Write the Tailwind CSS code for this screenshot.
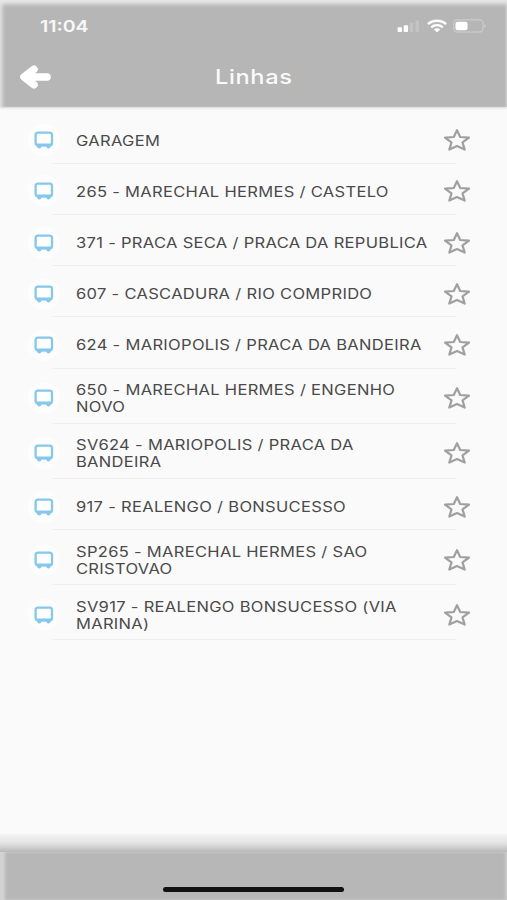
<!DOCTYPE html>
<html lang="pt-BR">
<head>
    <meta charset="UTF-8">
    <meta name="viewport" content="width=device-width, initial-scale=1.0">
    <title>Linhas</title>
    <script src="https://cdn.jsdelivr.net/npm/@tailwindcss/browser@4"></script>
</head>
<body class="bg-[#fafafa] font-['Inter',sans-serif] overflow-hidden">
    <div class="w-[507px] h-[900px] flex flex-col overflow-hidden">
        <header class="h-[107px] shrink-0 bg-[#b6b6b6] text-white shadow-[inset_2px_4px_4px_#e8e8e8,inset_-1px_0_2px_#d0d0d0,0_0_3px_#b6b6b6]">
            <!-- Status bar -->
            <div class="h-[52px] pl-10 pr-5 flex items-center justify-between">
                <span id="clock" class="inline-block origin-left scale-x-[1.22] text-[16px] font-semibold text-white/90">11:04</span>
                <div class="flex items-center">
                    <svg class="w-6 h-4" viewBox="0 0 24 16">
                        <rect x="2.6" y="9.3" width="4.4" height="4.7" rx="1" fill="#fff"/>
                        <rect x="8.7" y="7.3" width="4.4" height="6.7" rx="1" fill="#fff"/>
                        <rect x="14.7" y="4.8" width="3.6" height="9.2" rx="1" fill="#c4c4c4"/>
                        <rect x="20.5" y="2.2" width="3.4" height="11.8" rx="1" fill="#c4c4c4"/>
                    </svg>
                    <svg class="w-5 h-4 ml-2" viewBox="0 0 20 16" fill="none" stroke="#fff" stroke-width="2.3">
                        <path d="M.9 6.2C6 1.6 14 1.6 19.1 6.2"/>
                        <path d="M4.2 9.3C7.5 6.4 12.5 6.4 15.8 9.3"/>
                        <path d="M6.8 11.4C8.8 9.9 11.2 9.9 13.2 11.4L10 14.2Z" fill="#fff" stroke="none"/>
                    </svg>
                    <svg class="w-[34px] h-4 ml-1.5" viewBox="0 0 34 16">
                        <rect x=".7" y="1.7" width="29.3" height="12.3" rx="3.5" fill="none" stroke="#c8c8c8" stroke-width="1.4"/>
                        <rect x="2.5" y="3.7" width="12" height="8.6" rx="2" fill="#fff"/>
                        <path d="M31 6Q33 6.8 33 8T31 10Z" fill="#c8c8c8"/>
                    </svg>
                </div>
            </div>
            <!-- Title bar -->
            <div class="h-[50px] px-5 grid grid-cols-[32px_1fr_32px] items-center">
                <svg class="w-8 h-6" viewBox="0 0 32 24" fill="none" stroke="#fff" stroke-width="7.5" stroke-linecap="round" stroke-linejoin="round">
                    <path d="M14 4.2L4 12L14 19.8M6 12H27"/>
                    <path d="M14 5L5 12L14 19Z" fill="#fff" stroke="none"/>
                </svg>
                <h1 class="text-center"><span id="title" class="inline-block scale-x-[1.18] text-[20px] leading-6 font-medium tracking-[0.5px] text-white/95">Linhas</span></h1>
            </div>
        </header>

        <ul id="lines" class="flex-1 pt-[5.6px]"></ul>

        <footer class="h-[66px] shrink-0 flex flex-col">
            <div class="h-[18px] bg-linear-to-b from-[#f3f3f3] via-[#e4e4e4] to-[#b9b9b9]"></div>
            <div class="flex-1 bg-[#b7b7b7] flex justify-center pt-[35px] shadow-[inset_6px_0_3px_-1px_#d3d3d3,inset_-2px_0_3px_#cccccc]">
                <div class="w-[181px] h-[5px] rounded-full bg-[#111]"></div>
            </div>
        </footer>
    </div>

    <script>
        // text: one entry per printed line
        const lines = [
            ['GARAGEM'],
            ['265 - MARECHAL HERMES / CASTELO'],
            ['371 - PRACA SECA / PRACA DA REPUBLICA'],
            ['607 - CASCADURA / RIO COMPRIDO'],
            ['624 - MARIOPOLIS / PRACA DA BANDEIRA'],
            ['650 - MARECHAL HERMES / ENGENHO', 'NOVO'],
            ['SV624 - MARIOPOLIS / PRACA DA', 'BANDEIRA'],
            ['917 - REALENGO / BONSUCESSO'],
            ['SP265 - MARECHAL HERMES / SAO', 'CRISTOVAO'],
            ['SV917 - REALENGO BONSUCESSO (VIA', 'MARINA)'],
        ];

        document.getElementById('lines').innerHTML = lines.map(text => `
            <li>
                <div class="${text.length > 1 ? 'h-[54.2px]' : 'h-[50.2px]'} pt-[5px] pl-7 pr-9 flex items-center">
                    <span class="size-8 shrink-0 rounded-full bg-[#fdfdfd] flex items-center justify-center">
                        <svg class="w-5 h-[18px]" viewBox="0 0 20 18">
                            <rect x="1.6" y="1.7" width="16.4" height="12.6" rx="2.4" fill="#fff" stroke="#86c8ec" stroke-width="2.3"/>
                            <path d="M1.5 12.4H18V13.6Q18 15.3 16.3 15.3H3.2Q1.5 15.3 1.5 13.6Z" fill="#86c8ec"/>
                            <path d="M3 14H7.5V15.5Q7.2 17.5 5.3 17.5T3 15.5ZM12.2 14H16.7V15.5Q16.4 17.5 14.5 17.5T12.2 15.5Z" fill="#86c8ec"/>
                        </svg>
                    </span>
                    <p class="ml-4 flex-1 origin-left scale-x-[1.18] text-[14px] leading-[17px] tracking-[0.26px] text-[#4a4a4a] whitespace-nowrap">${text.join('<br>')}</p>
                    <svg class="w-7 h-6 shrink-0" viewBox="0 0 28 24" fill="none" stroke="#a0a0a0" stroke-width="2.2" stroke-linejoin="round">
                        <path d="M14 2.2L17.2 9L26 9.6L19.5 14.4L21.7 21.6L14 18L6.3 21.6L8.5 14.4L2 9.6L10.8 9Z"/>
                    </svg>
                </div>
                <div class="ml-[52px] mr-[51px] h-px bg-[#efefef]"></div>
            </li>
        `).join('');
    </script>
</body>
</html>
